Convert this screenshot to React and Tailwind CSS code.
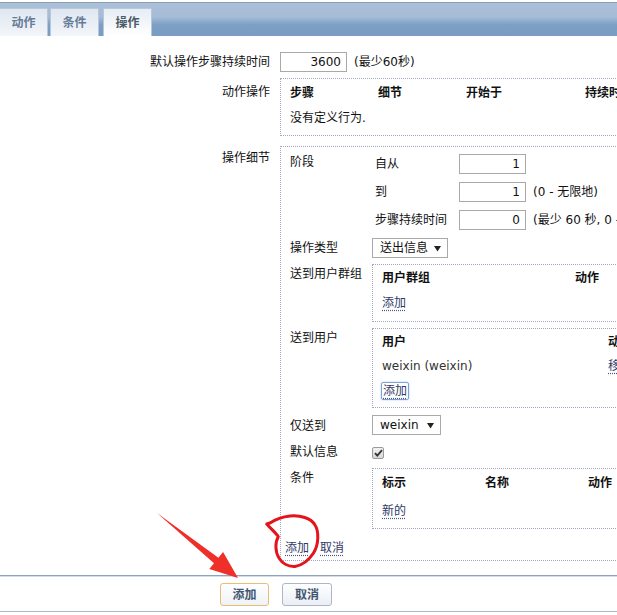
import React from 'react';

const Link = ({ children, className = '' }) => (
  <span className={`text-[#2f3a68] underline decoration-dotted decoration-[#4a5480] underline-offset-[3px] ${className}`}>
    {children}
  </span>
);

const Input = ({ value, className = '' }) => (
  <div className={`shrink-0 h-[20px] border border-[#a9a9a9] bg-white text-right pr-[5px] leading-[18px] ${className}`}>{value}</div>
);

const Select = ({ value, className = '' }) => (
  <div className={`shrink-0 h-[20px] border border-[#a9a9a9] bg-white flex items-center justify-between pl-[7px] pr-[6px] ${className}`}>
    <span>{value}</span>
    <svg width="7" height="7" viewBox="0 0 7 7"><path d="M0 1h7L3.5 6.5z" fill="#222" /></svg>
  </div>
);

const Tab = ({ label, active, className = '' }) => (
  <div
    className={`shrink-0 h-[28px] w-[49px] border border-b-0 border-[#b9c7d8] flex items-center justify-center font-bold ${
      active ? 'bg-gradient-to-b from-[#e6edf5] to-[#ffffff] text-[#4e5a68]' : 'bg-gradient-to-b from-[#dfe7f1] to-[#f3f6fa] text-[#667c96]'
    } ${className}`}
  >
    {label}
  </div>
);

export default function App() {
  return (
    <div className="relative w-[617px] h-[615px] overflow-hidden bg-white text-[12px] leading-4 text-[#111] font-['DejaVu_Sans','Noto_Sans_CJK_SC',sans-serif]">
      {/* tab bar */}
      <div className="pt-[2px]">
        <div className="h-[34px] border-t border-[#8a9eb7] bg-[linear-gradient(to_bottom,#abc0d9_0%,#a5bcd7_42%,#7c9fc4_66%,#799dc3_100%)] flex items-end">
          <Tab label="动作" className="ml-[-1px]" />
          <Tab label="条件" className="ml-[2px]" />
          <Tab label="操作" active className="ml-[4px]" />
        </div>
      </div>

      {/* form */}
      <div className="pt-[16px]">
        <div className="flex items-center h-[20px]">
          <div className="w-[280px] shrink-0 pr-[10px] text-right">默认操作步骤持续时间</div>
          <Input value="3600" className="w-[67px]" />
          <span className="ml-[7px] whitespace-nowrap">(最少60秒)</span>
        </div>

        <div className="flex mt-[6px]">
          <div className="w-[280px] shrink-0 pr-[10px] text-right pt-[6px]">动作操作</div>
          <div className="w-[400px] shrink-0 h-[58px] border-y border-l border-dotted border-[#a2a8c3] pt-[6px] pl-[9px] whitespace-nowrap">
            <div className="flex font-bold">
              <div className="w-[88px] shrink-0">步骤</div>
              <div className="w-[88px] shrink-0">细节</div>
              <div className="w-[119px] shrink-0">开始于</div>
              <div>持续时间</div>
            </div>
            <div className="mt-[9px]">没有定义行为.</div>
          </div>
        </div>

        <div className="flex mt-[10px]">
          <div className="w-[280px] shrink-0 pr-[10px] text-right pt-[4px]">操作细节</div>
          <div className="w-[400px] shrink-0 border-y border-l border-dotted border-[#a2a8c3] pt-[7px] pb-[4px] whitespace-nowrap">
            {/* stage */}
            <div className="flex">
              <div className="w-[91px] shrink-0 pl-[9px]">阶段</div>
              <div className="flex flex-col gap-[8px]">
                <div className="flex items-center h-[20px]">
                  <div className="w-[87px] shrink-0 pl-[3px]">自从</div>
                  <Input value="1" className="w-[67px]" />
                </div>
                <div className="flex items-center h-[20px]">
                  <div className="w-[87px] shrink-0 pl-[3px]">到</div>
                  <Input value="1" className="w-[67px]" />
                  <span className="ml-[7px]">(0 - 无限地)</span>
                </div>
                <div className="flex items-center h-[20px]">
                  <div className="w-[87px] shrink-0 pl-[3px]">步骤持续时间</div>
                  <Input value="0" className="w-[67px]" />
                  <span className="ml-[7px]">(最少 60 秒, 0 - 使用默认)</span>
                </div>
              </div>
            </div>

            <div className="flex mt-[8px]">
              <div className="w-[91px] shrink-0 pl-[9px] pt-[2px]">操作类型</div>
              <Select value="送出信息" className="w-[76px]" />
            </div>

            <div className="flex mt-[6px]">
              <div className="w-[91px] shrink-0 pl-[9px] pt-[2px]">送到用户群组</div>
              <div className="w-[300px] shrink-0 h-[58px] border-y border-l border-dotted border-[#a2a8c3] pt-[5px] pl-[9px]">
                <div className="flex font-bold">
                  <div className="w-[193px] shrink-0">用户群组</div>
                  <div>动作</div>
                </div>
                <div className="mt-[9px]"><Link>添加</Link></div>
              </div>
            </div>

            <div className="flex mt-[6px]">
              <div className="w-[91px] shrink-0 pl-[9px] pt-[2px]">送到用户</div>
              <div className="w-[300px] shrink-0 h-[80px] border-y border-l border-dotted border-[#a2a8c3] pt-[5px] pl-[9px]">
                <div className="flex font-bold">
                  <div className="w-[226px] shrink-0">用户</div>
                  <div>动作</div>
                </div>
                <div className="flex mt-[8px]">
                  <div className="w-[226px] shrink-0 text-[#333]">weixin (weixin)</div>
                  <Link>移除</Link>
                </div>
                <div className="mt-[8px] ml-[-1px]">
                  <span className="inline-block border border-[#7ea3d9] rounded-[2px] px-[1px] leading-[16px] shadow-[0_0_2px_#a9c4ec]">
                    <Link>添加</Link>
                  </span>
                </div>
              </div>
            </div>

            <div className="flex mt-[7px]">
              <div className="w-[91px] shrink-0 pl-[9px] pt-[3px]">仅送到</div>
              <Select value="weixin" className="w-[69px]" />
            </div>

            <div className="flex mt-[8px] h-[20px]">
              <div className="w-[91px] shrink-0 pl-[9px] pt-[1px]">默认信息</div>
              <div className="mt-[4px] w-[12px] h-[12px] rounded-[2px] border border-[#9b9b9b] bg-gradient-to-b from-[#f2f2f2] to-[#d6d6d6] flex items-center justify-center">
                <svg width="9" height="8" viewBox="0 0 9 8"><path d="M1 4.2l2.3 2.4L8 1.2" stroke="#333" strokeWidth="1.8" fill="none" /></svg>
              </div>
            </div>

            <div className="flex mt-[5px]">
              <div className="w-[91px] shrink-0 pl-[9px] pt-[2px]">条件</div>
              <div className="w-[300px] shrink-0 h-[61px] border-y border-l border-dotted border-[#a2a8c3] pt-[6px] pl-[9px]">
                <div className="flex font-bold">
                  <div className="w-[103px] shrink-0">标示</div>
                  <div className="w-[103px] shrink-0">名称</div>
                  <div>动作</div>
                </div>
                <div className="mt-[12px]"><Link>新的</Link></div>
              </div>
            </div>

            <div className="flex gap-[11px] mt-[11px] pl-[4px]">
              <Link>添加</Link>
              <Link>取消</Link>
            </div>
          </div>
        </div>
      </div>

      {/* footer buttons */}
      <div className="mt-[14px] border-t border-[#8da3bf]">
        <div className="h-[1px] bg-[#d3dde8]" />
        <div className="flex pt-[6px] pb-[5px] pl-[220px] gap-[13px] border-b border-[#a7b8cc]">
          <div className="w-[49px] h-[23px] rounded-[3px] border border-[#ebbd72] bg-gradient-to-b from-[#ffffff] to-[#eef2f7] flex items-center justify-center font-bold text-[#43566f]">添加</div>
          <div className="w-[50px] h-[23px] rounded-[3px] border border-[#a8b7cb] bg-gradient-to-b from-[#ffffff] to-[#eaeff5] flex items-center justify-center font-bold text-[#43566f]">取消</div>
        </div>
      </div>

      {/* red annotations */}
      <svg className="absolute inset-0 pointer-events-none" width="617" height="615" viewBox="0 0 617 615">
        <path
          d="M266.7 524 L270 523 C276 519 283 516.7 290 516 C300 515 311 518 315 525 C319 531 319 545 313.3 553.3 C309 560 304 565 295 566.5 C288 567 282 563 279 558 C275 552 275 542 278.3 536.7 C276 533 272 530 266.7 524 Z"
          fill="none"
          stroke="#e3141b"
          strokeWidth="3"
          strokeLinejoin="round"
        />
        <polygon
          points="157,513 218.4,557.8 223.1,551.9 238,578 209.3,569.1 214,563.2"
          fill="#ee2f2a"
        />
      </svg>
    </div>
  );
}
